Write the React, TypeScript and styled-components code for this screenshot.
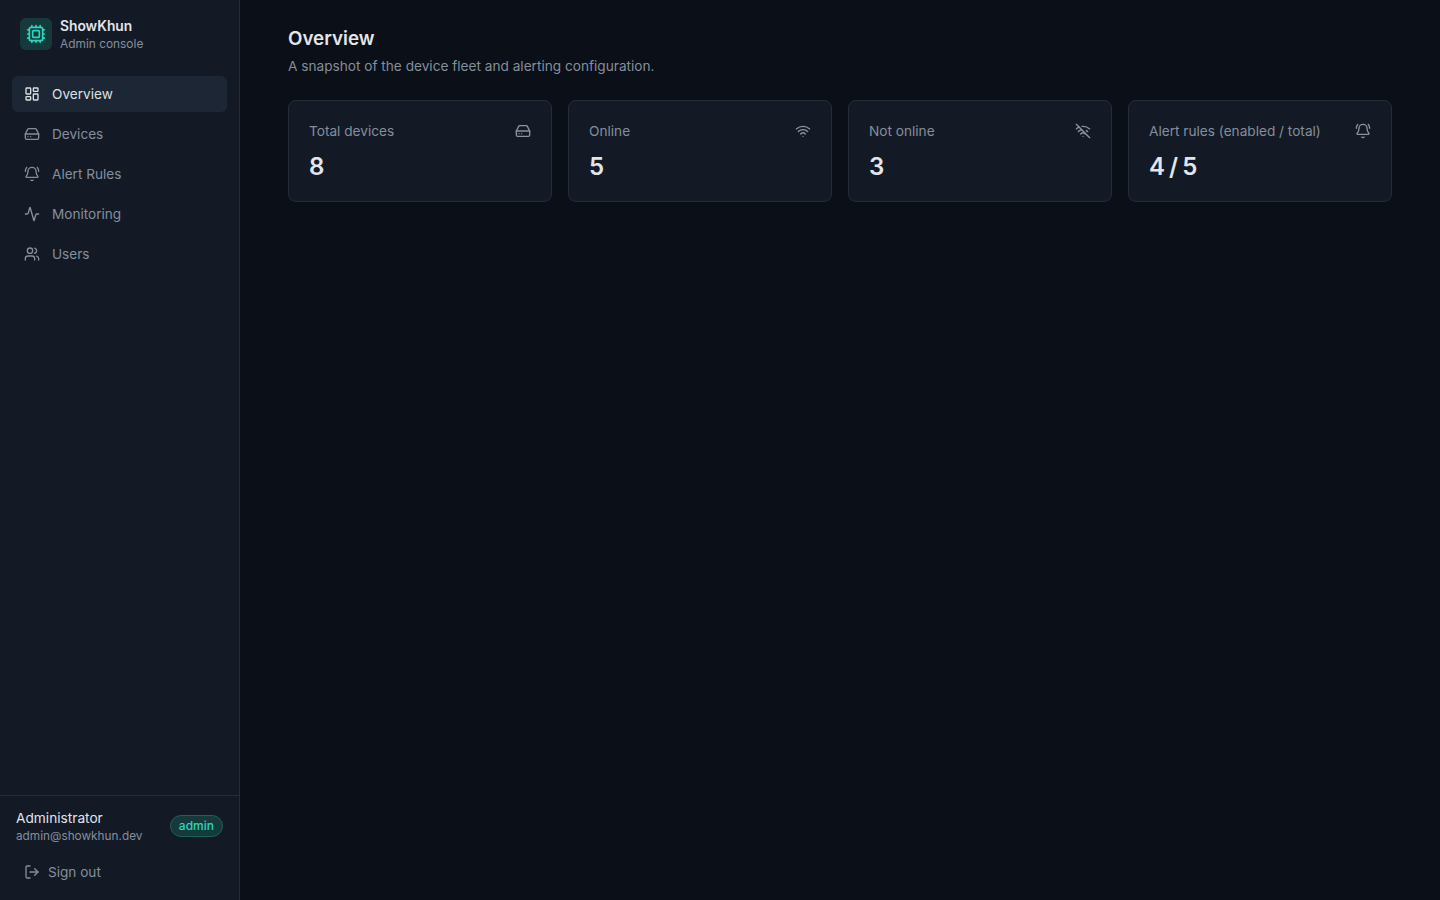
import React from 'react';
import styled, { createGlobalStyle } from 'styled-components';
import { Activity, BellRing, Cpu, HardDrive, LayoutDashboard, LogOut, Users, Wifi, WifiOff } from 'lucide-react';

const GlobalStyle = createGlobalStyle`
    html, body {
        margin: 0;
        padding: 0;
        height: 100%;
        background: #0b0f17;
    }

    * {
        box-sizing: border-box;
    }

    body {
        font-family: Inter, "Liberation Sans", sans-serif;
    }
`;

const navItems = [
    { label: 'Overview', icon: LayoutDashboard, active: true },
    { label: 'Devices', icon: HardDrive },
    { label: 'Alert Rules', icon: BellRing },
    { label: 'Monitoring', icon: Activity },
    { label: 'Users', icon: Users }
];

const stats = [
    { label: 'Total devices', value: '8', icon: HardDrive },
    { label: 'Online', value: '5', icon: Wifi },
    { label: 'Not online', value: '3', icon: WifiOff },
    { label: 'Alert rules (enabled / total)', value: '4 / 5', icon: BellRing }
];

const App = () => {
    return (
        <Shell>
            <GlobalStyle />
            <Sidebar>
                <Brand>
                    <LogoBox>
                        <Cpu size={20} color="#2dd4bf" strokeWidth={2} />
                    </LogoBox>
                    <div>
                        <BrandName>ShowKhun</BrandName>
                        <BrandSub>Admin console</BrandSub>
                    </div>
                </Brand>
                <Nav>
                    {navItems.map((item) => (
                        <NavItem key={item.label} $active={item.active}>
                            <item.icon size={16} strokeWidth={2} />
                            {item.label}
                        </NavItem>
                    ))}
                </Nav>
                <Footer>
                    <UserRow>
                        <div>
                            <UserName>Administrator</UserName>
                            <UserEmail>admin@showkhun.dev</UserEmail>
                        </div>
                        <RoleBadge>admin</RoleBadge>
                    </UserRow>
                    <SignOut>
                        <LogOut size={16} strokeWidth={2} />
                        Sign out
                    </SignOut>
                </Footer>
            </Sidebar>
            <Main>
                <Title>Overview</Title>
                <Subtitle>A snapshot of the device fleet and alerting configuration.</Subtitle>
                <CardGrid>
                    {stats.map((stat) => (
                        <Card key={stat.label}>
                            <CardHead>
                                <CardLabel>{stat.label}</CardLabel>
                                <stat.icon size={16} strokeWidth={2} color="#8b94a3" />
                            </CardHead>
                            <CardValue>{stat.value}</CardValue>
                        </Card>
                    ))}
                </CardGrid>
            </Main>
        </Shell>
    );
};

const Shell = styled.div`
    display: flex;
    width: 100%;
    height: 100vh;
    background: #0b0f17;
`;

const Sidebar = styled.aside`
    display: flex;
    flex-direction: column;
    flex: none;
    width: 240px;
    height: 100%;
    background: #131a26;
    border-right: 1px solid #262d39;
`;

const Brand = styled.div`
    display: flex;
    align-items: center;
    gap: 8px;
    height: 68px;
    padding: 0 20px;
`;

const LogoBox = styled.div`
    display: flex;
    align-items: center;
    justify-content: center;
    width: 32px;
    height: 32px;
    border-radius: 6px;
    background: #153a3b;
`;

const BrandName = styled.div`
    font-size: 13.8px;
    line-height: 20px;
    font-weight: 600;
    color: #e2e5ea;
`;

const BrandSub = styled.div`
    font-size: 11.9px;
    line-height: 16px;
    color: #858e9d;
`;

const Nav = styled.nav`
    display: flex;
    flex-direction: column;
    flex: 1;
    gap: 4px;
    padding: 8px 12px;
`;

const NavItem = styled.a<{ $active?: boolean }>`
    display: flex;
    align-items: center;
    gap: 12px;
    height: 36px;
    padding: 0 12px;
    border-radius: 6px;
    font-size: 13.6px;
    font-weight: 400;
    color: ${(p) => (p.$active ? '#dde0e6' : '#858e9d')};
    background: ${(p) => (p.$active ? '#1c2634' : 'transparent')};
`;

const Footer = styled.div`
    padding: 12px 16px;
    height: 105px;
    border-top: 1px solid #262d39;
`;

const UserRow = styled.div`
    display: flex;
    align-items: center;
    justify-content: space-between;
`;

const UserName = styled.div`
    font-size: 13.7px;
    line-height: 20px;
    color: #e2e5ea;
`;

const UserEmail = styled.div`
    font-size: 11.8px;
    line-height: 16px;
    color: #858e9d;
`;

const RoleBadge = styled.span`
    padding: 2px 8px;
    border: 1px solid #1f5f5c;
    border-radius: 999px;
    background: #153a3b;
    font-size: 12px;
    line-height: 16px;
    font-weight: 500;
    color: #2dd4bf;
`;

const SignOut = styled.button`
    display: flex;
    align-items: center;
    gap: 8px;
    height: 36px;
    margin-top: 10px;
    padding: 0 8px;
    border: none;
    background: transparent;
    font-family: inherit;
    font-size: 13.6px;
    font-weight: 400;
    color: #858e9d;
`;

const Main = styled.main`
    flex: 1;
    padding: 25px 48px 24px;
`;

const Title = styled.h1`
    margin: 0;
    font-size: 18.8px;
    line-height: 28px;
    font-weight: 600;
    color: #e2e5ea;
`;

const Subtitle = styled.p`
    margin: 3px 0 0;
    font-size: 13.65px;
    line-height: 20px;
    color: #858e9d;
`;

const CardGrid = styled.div`
    display: grid;
    grid-template-columns: repeat(4, 1fr);
    gap: 16px;
    margin-top: 24px;
`;

const Card = styled.div`
    height: 102px;
    padding: 20px;
    background: #131a26;
    border: 1px solid #262d39;
    border-radius: 8px;
`;

const CardHead = styled.div`
    display: flex;
    align-items: center;
    justify-content: space-between;
`;

const CardLabel = styled.div`
    font-size: 13.65px;
    line-height: 20px;
    color: #858e9d;
`;

const CardValue = styled.div`
    margin-top: 10px;
    font-size: 24px;
    line-height: 32px;
    font-weight: 600;
    letter-spacing: -0.04em;
    color: #e2e5ea;
`;

export default App;
